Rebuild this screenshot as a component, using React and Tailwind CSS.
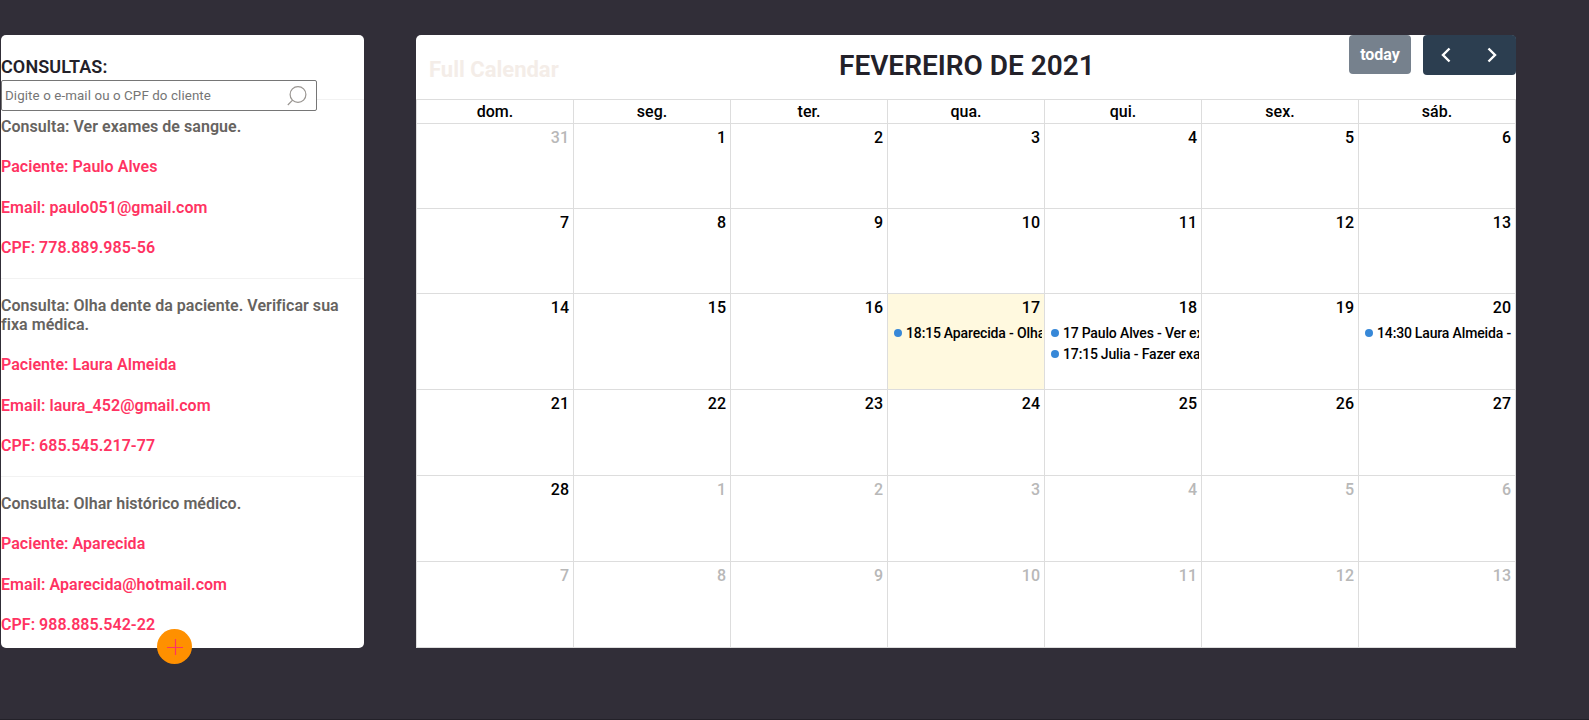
const weekdays = ["dom.", "seg.", "ter.", "qua.", "qui.", "sex.", "sáb."];

const weeks = [
  { height: "h-[85px]", days: [31, 1, 2, 3, 4, 5, 6], mutedUntil: 1 },
  { height: "h-[85px]", days: [7, 8, 9, 10, 11, 12, 13] },
  { height: "h-[96px]", days: [14, 15, 16, 17, 18, 19, 20], current: true },
  { height: "h-[86px]", days: [21, 22, 23, 24, 25, 26, 27] },
  { height: "h-[86px]", days: [28, 1, 2, 3, 4, 5, 6], mutedFrom: 1 },
  { height: "h-[86px]", days: [7, 8, 9, 10, 11, 12, 13], mutedFrom: 0 },
];

const events = {
  17: [{ time: "18:15", title: "Aparecida - Olhar" }],
  18: [
    { time: "17", title: "Paulo Alves - Ver exames" },
    { time: "17:15", title: "Julia - Fazer exames" },
  ],
  20: [{ time: "14:30", title: "Laura Almeida -" }],
};

const appointments = [
  { note: "Ver exames de sangue.", patient: "Paulo Alves", email: "paulo051@gmail.com", cpf: "778.889.985-56" },
  { note: "Olha dente da paciente. Verificar sua fixa médica.", patient: "Laura Almeida", email: "laura_452@gmail.com", cpf: "685.545.217-77" },
  { note: "Olhar histórico médico.", patient: "Aparecida", email: "Aparecida@hotmail.com", cpf: "988.885.542-22" },
];

function Appointment({ item, first, last }) {
  return (
    <article className={last ? "pt-[17px]" : first ? "border-b border-[#f2f2f2] pt-[6px] pb-[21px]" : "border-b border-[#f2f2f2] pt-[17px] pb-[21px]"}>
      <p className="leading-[19px] text-[#666360]">Consulta: {item.note}</p>
      <p className="mt-[21px] leading-[19px]">Paciente: {item.patient}</p>
      <p className="mt-[22px] leading-[19px]">Email: {item.email}</p>
      <p className="mt-[21px] leading-[19px]">CPF: {item.cpf}</p>
    </article>
  );
}

function Day({ day, muted, today, items }) {
  return (
    <div className={`flex w-[157px] flex-col border-r border-b border-[#dddddd] ${today ? "bg-[#fff9df]" : ""}`}>
      <div className={`pt-1 pr-1 text-right leading-[19px] ${muted ? "text-[#b8b8b8]" : "text-black"}`}>{day}</div>
      {items && (
        <div className="mt-[6px] mr-[2px] flex flex-col gap-[2px] pl-[2px]">
          {items.map((e) => (
            <div key={e.time} className="flex h-[19px] items-center overflow-hidden text-[14px] leading-[19px] tracking-[-0.14px] whitespace-nowrap text-black">
              <span className="mx-1 size-2 shrink-0 rounded-full bg-[#3788d8]" />
              <span className="mr-[3px] pt-[2px]">{e.time}</span>
              <span className="pt-[2px]">{e.title}</span>
            </div>
          ))}
        </div>
      )}
    </div>
  );
}

export default function App() {
  return (
    <div className="flex h-[720px] w-[1589px] flex-col justify-between overflow-hidden bg-[#312e38] font-['Roboto',sans-serif] text-base font-medium">
      <main className="flex pt-[35px] pl-px">
        <aside className="relative h-[613px] w-[363px] rounded-[5px] bg-white font-semibold tracking-[0.04px] text-[#ff3362]">
          <h2 className="pt-[20px] text-[18px] leading-[24px] tracking-[0.1px] text-[#232129]">CONSULTAS:</h2>
          <div className="flex items-center">
            <label className="mt-px flex h-[31px] w-[316px] items-center justify-between rounded-[2px] border border-[#767676] bg-white pr-[9px] pl-[3px]">
              <input className="w-64 text-[13.33px] font-normal tracking-[0.1px] outline-none placeholder:text-[#757575]" placeholder="Digite o e-mail ou o CPF do cliente" />
              <svg className="size-5" viewBox="0 0 20 20" fill="none" stroke="#999591" strokeWidth="1.2">
                <circle cx="11" cy="8.5" r="7.9" />
                <path d="M5.6 14.1L0.8 19" />
              </svg>
            </label>
            <span className="mt-[8px] h-px flex-1 bg-[#f2f2f2]" />
          </div>
          {appointments.map((a, i) => (
            <Appointment key={a.cpf} item={a} first={i === 0} last={i === 2} />
          ))}
          <button className="absolute top-[594px] left-[156px] flex size-[35px] items-center justify-center rounded-full bg-[#ff9000]">
            <svg className="size-4" viewBox="0 0 16 16" stroke="#ff3362" strokeWidth="1.2">
              <path d="M8.5 0V16M0 8.5H16" />
            </svg>
          </button>
        </aside>

        <section className="ml-[52px] h-[613px] w-[1100px] rounded-t-[5px] bg-white">
          <header className="flex h-16 items-start">
            <h1 className="w-[423px] pt-[21px] pl-[13px] text-[22px] leading-[28px] font-bold text-[#f4ede8]">Full Calendar</h1>
            <h2 className="flex-1 pt-[14px] text-[28px] leading-[34px] font-semibold text-[#232129]">FEVEREIRO DE 2021</h2>
            <div className="flex w-[167px] items-start gap-3">
              <button className="h-[39px] w-[62px] rounded-[4px] bg-[#76818d] font-bold text-white">today</button>
              <div className="flex h-10 flex-1 rounded-[4px] bg-[#2c3e50]">
                <button className="flex flex-1 items-center justify-center">
                  <svg className="h-4 w-[10px]" viewBox="0 0 10 16" fill="none" stroke="#fff" strokeWidth="2.4"><path d="M8.5 1.5L2 8L8.5 14.5" /></svg>
                </button>
                <button className="flex flex-1 items-center justify-center pr-[1px]">
                  <svg className="h-4 w-[10px]" viewBox="0 0 10 16" fill="none" stroke="#fff" strokeWidth="2.4"><path d="M1.5 1.5L8 8L1.5 14.5" /></svg>
                </button>
              </div>
            </div>
          </header>
          <div className="border-t border-l border-[#dddddd]">
            <div className="flex">
              {weekdays.map((d) => (
                <div key={d} className="h-6 w-[157px] border-r border-b border-[#dddddd] pt-[2px] text-center leading-[19px] text-black">{d}</div>
              ))}
            </div>
            {weeks.map((w, r) => (
              <div key={r} className={`flex ${w.height}`}>
                {w.days.map((d, c) => (
                  <Day
                    key={c}
                    day={d}
                    muted={c < (w.mutedUntil ?? 0) || c >= (w.mutedFrom ?? 7)}
                    today={w.current && d === 17}
                    items={w.current ? events[d] : undefined}
                  />
                ))}
              </div>
            ))}
          </div>
        </section>
      </main>
      <div className="h-px bg-[#232129]" />
    </div>
  );
}
